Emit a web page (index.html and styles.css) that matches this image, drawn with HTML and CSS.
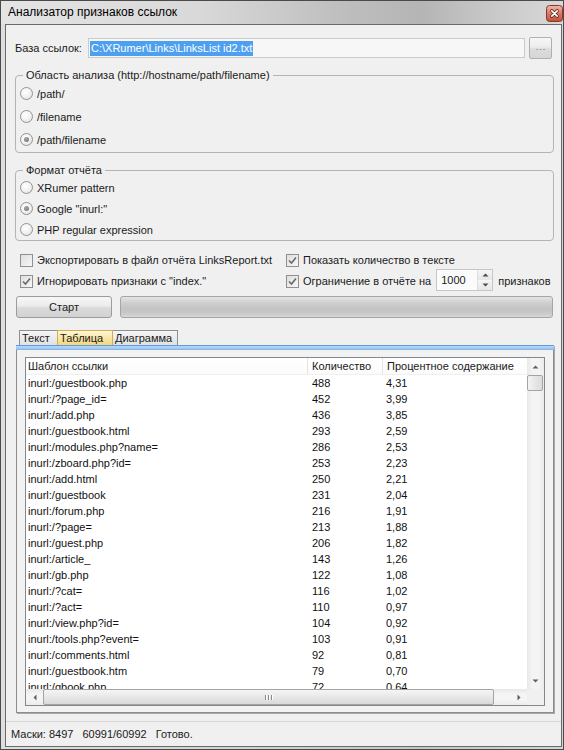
FILE: index.html
```html
<!DOCTYPE html>
<html lang="ru">
<head>
<meta charset="utf-8">
<title>Анализатор признаков ссылок</title>
<link rel="stylesheet" href="styles.css">
</head>
<body>
<div class="window">
  <div class="titlebar">
    <span class="title">Анализатор признаков ссылок</span>
    <span class="close">
      <svg width="17" height="17" viewBox="0 0 17 17">
        <defs>
          <linearGradient id="cg" x1="0" y1="0" x2="0" y2="1">
            <stop offset="0" stop-color="#f0b8aa"/>
            <stop offset="0.5" stop-color="#d87b66"/>
            <stop offset="1" stop-color="#c24e38"/>
          </linearGradient>
        </defs>
        <rect x="0.5" y="0.5" width="16" height="16" rx="3" fill="url(#cg)" stroke="#8a3727"/>
        <path d="M5.8 5.8 L11.2 11.2 M11.2 5.8 L5.8 11.2" stroke="#5b2016" stroke-width="3.2" stroke-linecap="round"/>
        <path d="M5.8 5.8 L11.2 11.2 M11.2 5.8 L5.8 11.2" stroke="#ffffff" stroke-width="1.7" stroke-linecap="round"/>
      </svg>
    </span>
  </div>
  <div class="client">
    <div class="row-base">
      <span class="base-label">База ссылок:</span>
      <div class="path-input"><span class="sel">C:\XRumer\Links\LinksList id2.txt</span></div>
      <div class="btn-browse">...</div>
    </div>

    <fieldset class="group group-scope">
      <legend>Область анализа (http://hostname/path/filename)</legend>
      <div class="opt"><span class="radio"></span>/path/</div>
      <div class="opt"><span class="radio"></span>/filename</div>
      <div class="opt"><span class="radio checked"></span>/path/filename</div>
    </fieldset>

    <fieldset class="group group-format">
      <legend>Формат отчёта</legend>
      <div class="opt"><span class="radio"></span>XRumer pattern</div>
      <div class="opt"><span class="radio checked"></span>Google "inurl:"</div>
      <div class="opt"><span class="radio"></span>PHP regular expression</div>
    </fieldset>

    <div class="checks">
      <div class="chk"><span class="box"></span>Экспортировать в файл отчёта LinksReport.txt</div>
      <div class="chk"><span class="box checked"><svg width="11" height="11" viewBox="0 0 11 11"><path d="M2 5.5 L4.5 8 L9 2.5" fill="none" stroke="#6a6a6a" stroke-width="1.6"/></svg></span>Показать количество в тексте</div>
      <div class="chk"><span class="box checked"><svg width="11" height="11" viewBox="0 0 11 11"><path d="M2 5.5 L4.5 8 L9 2.5" fill="none" stroke="#6a6a6a" stroke-width="1.6"/></svg></span>Игнорировать признаки с "index."</div>
      <div class="chk"><span class="box checked"><svg width="11" height="11" viewBox="0 0 11 11"><path d="M2 5.5 L4.5 8 L9 2.5" fill="none" stroke="#6a6a6a" stroke-width="1.6"/></svg></span>Ограничение в отчёте на
        <div class="spin">
          <span class="spin-val">1000</span>
          <span class="spin-btns">
            <span class="spin-up"><svg width="7" height="4" viewBox="0 0 7 4"><path d="M0.5 3.5 L3.5 0.5 L6.5 3.5 Z" fill="#4a4a4a"/></svg></span>
            <span class="spin-down"><svg width="7" height="4" viewBox="0 0 7 4"><path d="M0.5 0.5 L3.5 3.5 L6.5 0.5 Z" fill="#4a4a4a"/></svg></span>
          </span>
        </div>
        <span class="suffix">признаков</span>
      </div>
    </div>

    <div class="run-row">
      <div class="btn-start">Старт</div>
      <div class="progress"></div>
    </div>

    <div class="tabs">
      <div class="tab tab-text">Текст</div>
      <div class="tab tab-table active">Таблица</div>
      <div class="tab tab-chart">Диаграмма</div>
    </div>

    <div class="panel">
      <div class="band"></div>
      <div class="panel-body">
        <div class="listview">
          <div class="lv-main">
            <div class="lv-head">
              <div class="c1">Шаблон ссылки</div>
              <div class="c2">Количество</div>
              <div class="c3">Процентное содержание</div>
            </div>
            <div class="lv-row"><div class="c1">inurl:/guestbook.php</div><div class="c2">488</div><div class="c3">4,31</div></div>
            <div class="lv-row"><div class="c1">inurl:/?page_id=</div><div class="c2">452</div><div class="c3">3,99</div></div>
            <div class="lv-row"><div class="c1">inurl:/add.php</div><div class="c2">436</div><div class="c3">3,85</div></div>
            <div class="lv-row"><div class="c1">inurl:/guestbook.html</div><div class="c2">293</div><div class="c3">2,59</div></div>
            <div class="lv-row"><div class="c1">inurl:/modules.php?name=</div><div class="c2">286</div><div class="c3">2,53</div></div>
            <div class="lv-row"><div class="c1">inurl:/zboard.php?id=</div><div class="c2">253</div><div class="c3">2,23</div></div>
            <div class="lv-row"><div class="c1">inurl:/add.html</div><div class="c2">250</div><div class="c3">2,21</div></div>
            <div class="lv-row"><div class="c1">inurl:/guestbook</div><div class="c2">231</div><div class="c3">2,04</div></div>
            <div class="lv-row"><div class="c1">inurl:/forum.php</div><div class="c2">216</div><div class="c3">1,91</div></div>
            <div class="lv-row"><div class="c1">inurl:/?page=</div><div class="c2">213</div><div class="c3">1,88</div></div>
            <div class="lv-row"><div class="c1">inurl:/guest.php</div><div class="c2">206</div><div class="c3">1,82</div></div>
            <div class="lv-row"><div class="c1">inurl:/article_</div><div class="c2">143</div><div class="c3">1,26</div></div>
            <div class="lv-row"><div class="c1">inurl:/gb.php</div><div class="c2">122</div><div class="c3">1,08</div></div>
            <div class="lv-row"><div class="c1">inurl:/?cat=</div><div class="c2">116</div><div class="c3">1,02</div></div>
            <div class="lv-row"><div class="c1">inurl:/?act=</div><div class="c2">110</div><div class="c3">0,97</div></div>
            <div class="lv-row"><div class="c1">inurl:/view.php?id=</div><div class="c2">104</div><div class="c3">0,92</div></div>
            <div class="lv-row"><div class="c1">inurl:/tools.php?event=</div><div class="c2">103</div><div class="c3">0,91</div></div>
            <div class="lv-row"><div class="c1">inurl:/comments.html</div><div class="c2">92</div><div class="c3">0,81</div></div>
            <div class="lv-row"><div class="c1">inurl:/guestbook.htm</div><div class="c2">79</div><div class="c3">0,70</div></div>
            <div class="lv-row"><div class="c1">inurl:/gbook.php</div><div class="c2">72</div><div class="c3">0,64</div></div>
          </div>
          <div class="vscroll">
            <div class="arrow"><svg width="7" height="4" viewBox="0 0 7 4"><path d="M0.5 3.5 L3.5 0.5 L6.5 3.5 Z" fill="#606060"/></svg></div>
            <div class="vthumb"></div>
            <div class="vtrack"></div>
            <div class="arrow"><svg width="7" height="4" viewBox="0 0 7 4"><path d="M0.5 0.5 L3.5 3.5 L6.5 0.5 Z" fill="#606060"/></svg></div>
          </div>
          <div class="hscroll">
            <div class="harrow"><svg width="4" height="7" viewBox="0 0 4 7"><path d="M3.5 0.5 L0.5 3.5 L3.5 6.5 Z" fill="#606060"/></svg></div>
            <div class="hthumb"><span class="grip"></span><span class="grip"></span><span class="grip"></span></div>
            <div class="htrack"></div>
            <div class="harrow"><svg width="4" height="7" viewBox="0 0 4 7"><path d="M0.5 0.5 L3.5 3.5 L0.5 6.5 Z" fill="#606060"/></svg></div>
          </div>
          <div class="corner"></div>
        </div>
      </div>
    </div>

    <div class="statusbar">
      <span class="seg">Маски: 8497</span>
      <span class="seg">60991/60992</span>
      <span class="seg">Готово.</span>
    </div>
  </div>
</div>
</body>
</html>
```

FILE: styles.css
```css
html, body {
  margin: 0;
  padding: 0;
}

body {
  width: 564px;
  height: 750px;
  overflow: hidden;
  font-family: "Liberation Sans", Arial, sans-serif;
  font-size: 11px;
  color: #1a1a1a;
  background: #d6d6d6;
}

.window {
  box-sizing: border-box;
  width: 564px;
  height: 750px;
  border: 1px solid #4a4a4a;
  background: linear-gradient(90deg, #dedede 0%, #d2d2d2 45%, #c6c6c6 75%, #d4d4d4 100%);
  display: flex;
  flex-direction: column;
}

/* ---------- title bar ---------- */
.titlebar {
  height: 23px;
  flex: none;
  display: flex;
  justify-content: space-between;
  align-items: flex-start;
  padding-left: 7px;
  background: linear-gradient(90deg, #e4e4e4 0%, #d9d9d9 35%, #bdbdbd 62%, #b5b5b5 75%, #c9c9c9 88%, #d8d8d8 100%);
}

.title {
  font-size: 12px;
  line-height: 23px;
  color: #000;
}

.close {
  margin-top: 4px;
  margin-right: 0;
  width: 17px;
  height: 17px;
  display: flex;
}

/* ---------- client ---------- */
.client {
  flex: 1;
  margin: 0 1px 2px 4px;
  border: 1px solid #6a6a6a;
  background: #f0f0f0;
  padding: 12px 7px 0 9px;
  display: flex;
  flex-direction: column;
  min-height: 0;
}

.row-base {
  display: flex;
  align-items: center;
  height: 22px;
  flex: none;
}

.base-label {
  width: 73px;
  flex: none;
  color: #1a1a1a;
}

.path-input {
  flex: 1;
  height: 20px;
  box-sizing: border-box;
  border: 1px solid #cacaca;
  background: #f7f7f7;
  padding-left: 1px;
  display: flex;
  align-items: center;
}

.sel {
  background: #4d9ff0;
  color: #fff;
  line-height: 15px;
  padding: 0 1px;
}

.btn-browse {
  width: 23px;
  height: 22px;
  box-sizing: border-box;
  margin-left: 4px;
  margin-right: 2px;
  border: 1px solid #b0b0b0;
  border-radius: 2px;
  background: linear-gradient(#f7f7f7, #ececec 45%, #dcdcdc 55%, #d6d6d6);
  color: #666;
  font-size: 9px;
  letter-spacing: 1px;
  text-align: center;
  line-height: 19px;
  padding-left: 1px;
}

/* ---------- group boxes ---------- */
.group {
  margin: 10px 0 0 0;
  padding: 0 4px 1px 4px;
  border: 1px solid #b4b4b4;
  border-radius: 4px;
  min-width: 0;
  flex: none;
}

.group legend {
  padding: 0 3px;
  margin-left: 3px;
  line-height: 13px;
  font-size: 11px;
  color: #1a1a1a;
}

.group-format {
  margin-top: 11px;
  padding-bottom: 0;
}

.opt {
  display: flex;
  align-items: center;
  gap: 4px;
  height: 23px;
}

.group-format .opt {
  height: 21px;
}

.radio {
  width: 13px;
  height: 13px;
  box-sizing: border-box;
  border-radius: 50%;
  border: 1px solid #939393;
  background: radial-gradient(circle at 40% 35%, #ffffff 0%, #f2f2f2 50%, #dadada 100%);
  flex: none;
  display: flex;
  align-items: center;
  justify-content: center;
}

.radio.checked::after {
  content: "";
  width: 5px;
  height: 5px;
  border-radius: 50%;
  background: radial-gradient(circle at 40% 35%, #a8a8a8, #6c6c6c);
}

/* ---------- checkboxes ---------- */
.checks {
  margin-top: 9px;
  padding-left: 5px;
  display: grid;
  grid-template-columns: 266px 1fr;
  grid-template-rows: 20px 22px;
  flex: none;
}

.chk {
  display: flex;
  align-items: center;
  gap: 4px;
  white-space: nowrap;
}

.box {
  width: 13px;
  height: 13px;
  box-sizing: border-box;
  border: 1px solid #909090;
  background: linear-gradient(135deg, #dedede, #f7f7f7);
  flex: none;
  display: flex;
  align-items: center;
  justify-content: center;
}

.spin {
  margin-left: 1px;
  width: 57px;
  height: 22px;
  box-sizing: border-box;
  border: 1px solid #c6c6c6;
  background: #fbfbfb;
  display: flex;
  margin-top: -3px;
}

.spin-val {
  flex: 1;
  padding-left: 4px;
  line-height: 20px;
}

.spin-btns {
  width: 14px;
  display: flex;
  flex-direction: column;
  border-left: 1px solid #dedede;
}

.spin-up, .spin-down {
  flex: 1;
  display: flex;
  align-items: center;
  justify-content: center;
  background: linear-gradient(#f6f6f6, #e6e6e6);
}

.suffix {
  margin-left: 1px;
}

/* ---------- run row ---------- */
.run-row {
  margin-top: 4px;
  display: flex;
  gap: 8px;
  height: 22px;
  flex: none;
}

.btn-start {
  margin-left: 1px;
  width: 96px;
  box-sizing: border-box;
  border: 1px solid #9c9c9c;
  border-radius: 3px;
  background: linear-gradient(#f7f7f7, #ebebeb 45%, #dadada 55%, #d2d2d2);
  text-align: center;
  line-height: 20px;
  color: #222;
}

.progress {
  flex: 1;
  margin-right: 1px;
  box-sizing: border-box;
  border: 1px solid #a6a6a6;
  border-radius: 3px;
  background: linear-gradient(#e4e4e4, #cfcfcf 30%, #c3c3c3 60%, #cbcbcb 85%, #d9d9d9);
}

/* ---------- tabs ---------- */
.tabs {
  margin-top: 12px;
  padding-left: 4px;
  display: flex;
  height: 15px;
  flex: none;
}

.tab {
  box-sizing: border-box;
  height: 15px;
  border: 1px solid #8d9096;
  border-bottom: none;
  background: linear-gradient(#f5f5f5, #e1e1e1);
  padding-left: 2px;
  line-height: 14px;
  color: #1a1a1a;
  margin-right: -1px;
}

.tab-text { width: 39px; }
.tab-table { width: 56px; }
.tab-chart { width: 66px; }

.tab.active {
  position: relative;
  border-color: #d0ae4e;
  background: linear-gradient(#fdf6d8, #f9e39c 60%, #f5d67a);
}

/* ---------- panel ---------- */
.panel {
  margin-left: 1px;
  height: 368px;
  flex: none;
  display: flex;
  flex-direction: column;
  box-shadow: 1px 1px 0 #a8a8a8;
}

.band {
  height: 5px;
  background: linear-gradient(#5d9be0 0, #5d9be0 1px, #b9d9f7 1px, #9ac5ee 4px, #74a9e0 5px);
}

.panel-body {
  flex: 1;
  border: 1px solid #8c8c8c;
  border-top: none;
  background: #f2f2f2;
  padding: 7px 8px 6px 8px;
  display: flex;
  min-height: 0;
}

.listview {
  flex: 1;
  border: 1px solid #828790;
  background: #fff;
  display: grid;
  grid-template-columns: 1fr 17px;
  grid-template-rows: 1fr 16px;
  min-height: 0;
}

.lv-main {
  overflow: hidden;
  min-height: 0;
}

.lv-head, .lv-row {
  display: grid;
  grid-template-columns: 282px 75px 1fr;
  white-space: nowrap;
}

.lv-head {
  height: 17px;
  line-height: 16px;
  background: linear-gradient(#ffffff, #fbfbfb);
  border-bottom: 1px solid #f0f0f0;
  box-sizing: border-box;
}

.lv-head > div {
  border-right: 1px solid #e3e3e3;
}

.lv-head .c3 {
  border-right: none;
}

.lv-row {
  height: 16px;
  line-height: 16px;
  color: #111;
}

.c1 { padding-left: 2px; }
.c2 { padding-left: 4px; }
.c3 { padding-left: 3px; }
.lv-head .c3 { padding-left: 4px; }

.vscroll {
  grid-row: 1;
  grid-column: 2;
  display: flex;
  flex-direction: column;
  background: linear-gradient(90deg, #e8e8e8, #f4f4f4 30%, #f4f4f4 70%, #ebebeb);
}

.arrow, .harrow {
  flex: none;
  display: flex;
  align-items: center;
  justify-content: center;
}

.arrow {
  height: 17px;
}

.vthumb {
  height: 16px;
  margin: 0 1px 0 0;
  box-sizing: border-box;
  border: 1px solid #a3a3a3;
  border-radius: 2px;
  background: linear-gradient(90deg, #f4f4f4, #e6e6e6 50%, #dcdcdc);
}

.vtrack {
  flex: 1;
}

.hscroll {
  grid-row: 2;
  grid-column: 1;
  display: flex;
  background: linear-gradient(#e8e8e8, #f4f4f4 30%, #f4f4f4 70%, #ebebeb);
}

.harrow {
  width: 17px;
}

.hthumb {
  width: 451px;
  box-sizing: border-box;
  border: 1px solid #a3a3a3;
  border-radius: 2px;
  background: linear-gradient(#f5f5f5, #e8e8e8 50%, #d9d9d9);
  display: flex;
  justify-content: center;
  align-items: center;
  gap: 1px;
}

.grip {
  width: 1px;
  height: 5px;
  background: #8a8a8a;
  border-right: 1px solid #fff;
}

.htrack {
  flex: 1;
}

.corner {
  grid-row: 2;
  grid-column: 2;
  background: #f0f0f0;
}

/* ---------- status bar ---------- */
.statusbar {
  margin: 8px -7px 0 -9px;
  border-top: 1px solid #d6d6d6;
  flex: 1;
  display: flex;
  align-items: center;
  padding-left: 5px;
  font-size: 11px;
  color: #1a1a1a;
}

.seg {
  margin-right: 9px;
}
```
